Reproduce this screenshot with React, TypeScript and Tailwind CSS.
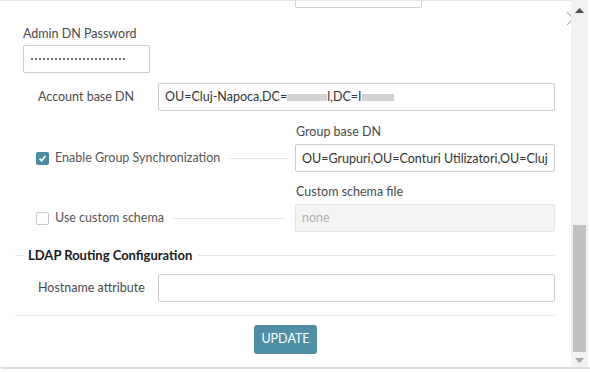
import React from "react";

const font = { fontFamily: "Lato, 'Open Sans', sans-serif" };

function Redact({ w }: { w: number }) {
  return <span className="inline-block h-[7px] bg-[#d2d2d2] align-middle" style={{ width: w }} />;
}

export default function App() {
  const dots = Array.from({ length: 24 });
  return (
    <div className="relative w-[590px] h-[372px] overflow-hidden bg-white text-[12.5px] text-[#4a4a4a]" style={font}>
      <div className="flex h-[369px] border-b-2 border-[#dcdcdc] rounded-bl-[3px]">
        {/* content */}
        <div className="relative flex-1 border-t border-[#e6e6e6]">
          {/* partial input at top */}
          <div className="ml-[295px] w-[127px] h-[8px] border-x border-b border-[#cfcfcf] rounded-b-[2px] -mt-px" />

          <div className="pl-[23px] mt-[18px] leading-[16px]">Admin DN Password</div>
          <div className="ml-[23px] mt-[3px] w-[127px] h-[28px] border border-[#cccccc] rounded-[2px] flex items-center pl-[7px] gap-[2px]">
            {dots.map((_, i) => (
              <div key={i} className="w-[2px] h-[2px] rounded-full bg-[#444]" />
            ))}
          </div>

          {/* Account base DN */}
          <div className="flex items-center mt-[10px] pl-[38px]">
            <div className="w-[120px]">Account base DN</div>
            <div className="w-[397px] h-[28px] border border-[#cccccc] rounded-[2px] flex items-center pl-[6px] text-[#333] whitespace-nowrap">
              OU=Cluj-Napoca,DC=<Redact w={40} />l,DC=I<Redact w={32} />
            </div>
          </div>

          {/* Group sync */}
          <div className="flex items-end mt-[13px] pl-[36px]">
            <div className="flex items-center h-[28px] w-[259px]">
              <div className="w-[13px] h-[13px] rounded-[2px] bg-[#4a8ca5] flex items-center justify-center">
                <svg width="9" height="9" viewBox="0 0 9 9">
                  <path d="M1.5 4.6 L3.6 6.7 L7.6 1.8" fill="none" stroke="white" strokeWidth="1.6" />
                </svg>
              </div>
              <span className="ml-[6px] text-[#555]">Enable Group Synchronization</span>
              <div className="flex-1 h-px bg-[#e4e4e4] ml-[9px] mr-[8px]" />
            </div>
            <div className="flex flex-col">
              <div className="leading-[16px] pl-px">Group base DN</div>
              <input
                readOnly
                value="OU=Grupuri,OU=Conturi Utilizatori,OU=Cluj-Napoca,DC=local"
                className="mt-[4px] w-[260px] h-[28px] border border-[#cccccc] rounded-[2px] px-[6px] text-[#333] text-[12.5px] outline-none"
                style={font}
              />
            </div>
          </div>

          {/* custom schema */}
          <div className="flex items-end mt-[12px] pl-[36px]">
            <div className="flex items-center h-[28px] w-[259px]">
              <div className="w-[13px] h-[13px] rounded-[2px] border border-[#c8c8c8] bg-white" />
              <span className="ml-[6px] text-[#555]">Use custom schema</span>
              <div className="flex-1 h-px bg-[#e4e4e4] ml-[9px] mr-[10px]" />
            </div>
            <div className="flex flex-col">
              <div className="leading-[16px] pl-px">Custom schema file</div>
              <div className="mt-[4px] w-[260px] h-[28px] border border-[#e2e2e2] bg-[#f3f3f3] rounded-[2px] flex items-center pl-[6px] text-[#b0b0b0]">
                none
              </div>
            </div>
          </div>

          {/* section header */}
          <div className="flex items-center ml-[15px] w-[540px] mt-[15px]">
            <div className="w-[8px] h-px bg-[#e4e4e4]" />
            <div className="ml-[5px] font-bold text-[13px] text-[#1a1a1a] leading-[16px]">LDAP Routing Configuration</div>
            <div className="flex-1 h-px bg-[#e4e4e4] ml-[6px]" />
          </div>

          {/* hostname */}
          <div className="flex items-center mt-[11px] pl-[38px]">
            <div className="w-[120px]">Hostname attribute</div>
            <div className="w-[397px] h-[28px] border border-[#cccccc] rounded-[2px]" />
          </div>

          <div className="ml-[15px] w-[540px] h-px bg-[#e4e4e4] mt-[13px]" />

          <div className="flex justify-center w-[570px] mt-[9px]">
            <button className="ml-[1px] w-[63px] h-[29px] rounded-[3px] bg-[#4f8fa6] text-white text-[12.5px]" style={font}>
              UPDATE
            </button>
          </div>

          {/* close X */}
          <svg className="absolute left-[566px] top-[10px]" width="15" height="15" viewBox="0 0 15 15">
            <path d="M1 1 L14 14 M14 1 L1 14" stroke="#9fbfcd" strokeWidth="1.2" />
          </svg>
        </div>

        {/* scrollbar */}
        <div className="relative w-[17px] bg-[#f1f1f1] flex flex-col items-center">
          <svg className="mt-[8px]" width="9" height="5" viewBox="0 0 9 5">
            <path d="M0 5 L4.5 0 L9 5 Z" fill="#505050" />
          </svg>
          <div className="mt-[212px] w-[13px] h-[127px] bg-[#c1c1c1]" />
          <svg className="mt-[6px]" width="9" height="5" viewBox="0 0 9 5">
            <path d="M0 0 L9 0 L4.5 5 Z" fill="#a3a3a3" />
          </svg>
        </div>
        <div className="w-[2px] bg-white" />
      </div>
    </div>
  );
}
